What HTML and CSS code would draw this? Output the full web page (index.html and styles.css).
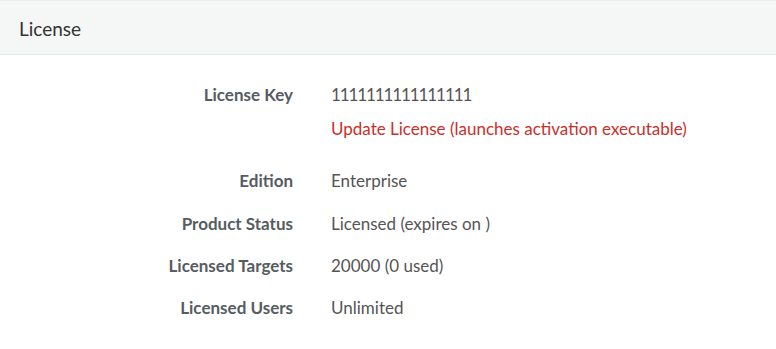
FILE: index.html
```html
<!DOCTYPE html>
<html lang="en">
<head>
    <meta charset="UTF-8">
    <title>License</title>
    <link rel="stylesheet" href="styles.css">
</head>
<body>
    <div class="panel">
        <div class="panel-heading">License</div>
        <div class="panel-body">
            <dl class="info">
                <dt>License Key</dt>
                <dd>
                    <div class="key">1111111111111111</div>
                    <a class="update-link" href="#">Update License (launches activation executable)</a>
                </dd>
                <dt>Edition</dt>
                <dd>Enterprise</dd>
                <dt>Product Status</dt>
                <dd>Licensed (expires on )</dd>
                <dt>Licensed Targets</dt>
                <dd>20000 (0 used)</dd>
                <dt>Licensed Users</dt>
                <dd>Unlimited</dd>
            </dl>
        </div>
    </div>
</body>
</html>
```

FILE: styles.css
```css
body {
    margin: 0;
    background-color: #fff;
    font-family: Lato, "Liberation Sans", sans-serif;
    color: #555;
}

.panel {
    border-top: 1px solid #eceeee;
}

.panel-heading {
    background-color: #f5f6f6;
    border-bottom: 1px solid #e8eaea;
    padding: 16px 19px 15px;
    font-size: 19px;
    color: #333;
    height: 22px;
}

.panel-body {
    padding: 28px 0 20px;
}

.info {
    display: grid;
    grid-template-columns: 293px 1fr;
    column-gap: 38px;
    row-gap: 19.33px;
    margin: 0;
    font-size: 17px;
    line-height: 23px;
}

.info dt {
    text-align: right;
    font-weight: bold;
    color: #555c62;
}

.info dd {
    margin: 0;
    color: #555;
}

.key {
    letter-spacing: -1.1px;
}

.update-link {
    display: block;
    margin-top: 11px;
    margin-bottom: 10px;
    color: #c9302c;
    text-decoration: none;
}
```
